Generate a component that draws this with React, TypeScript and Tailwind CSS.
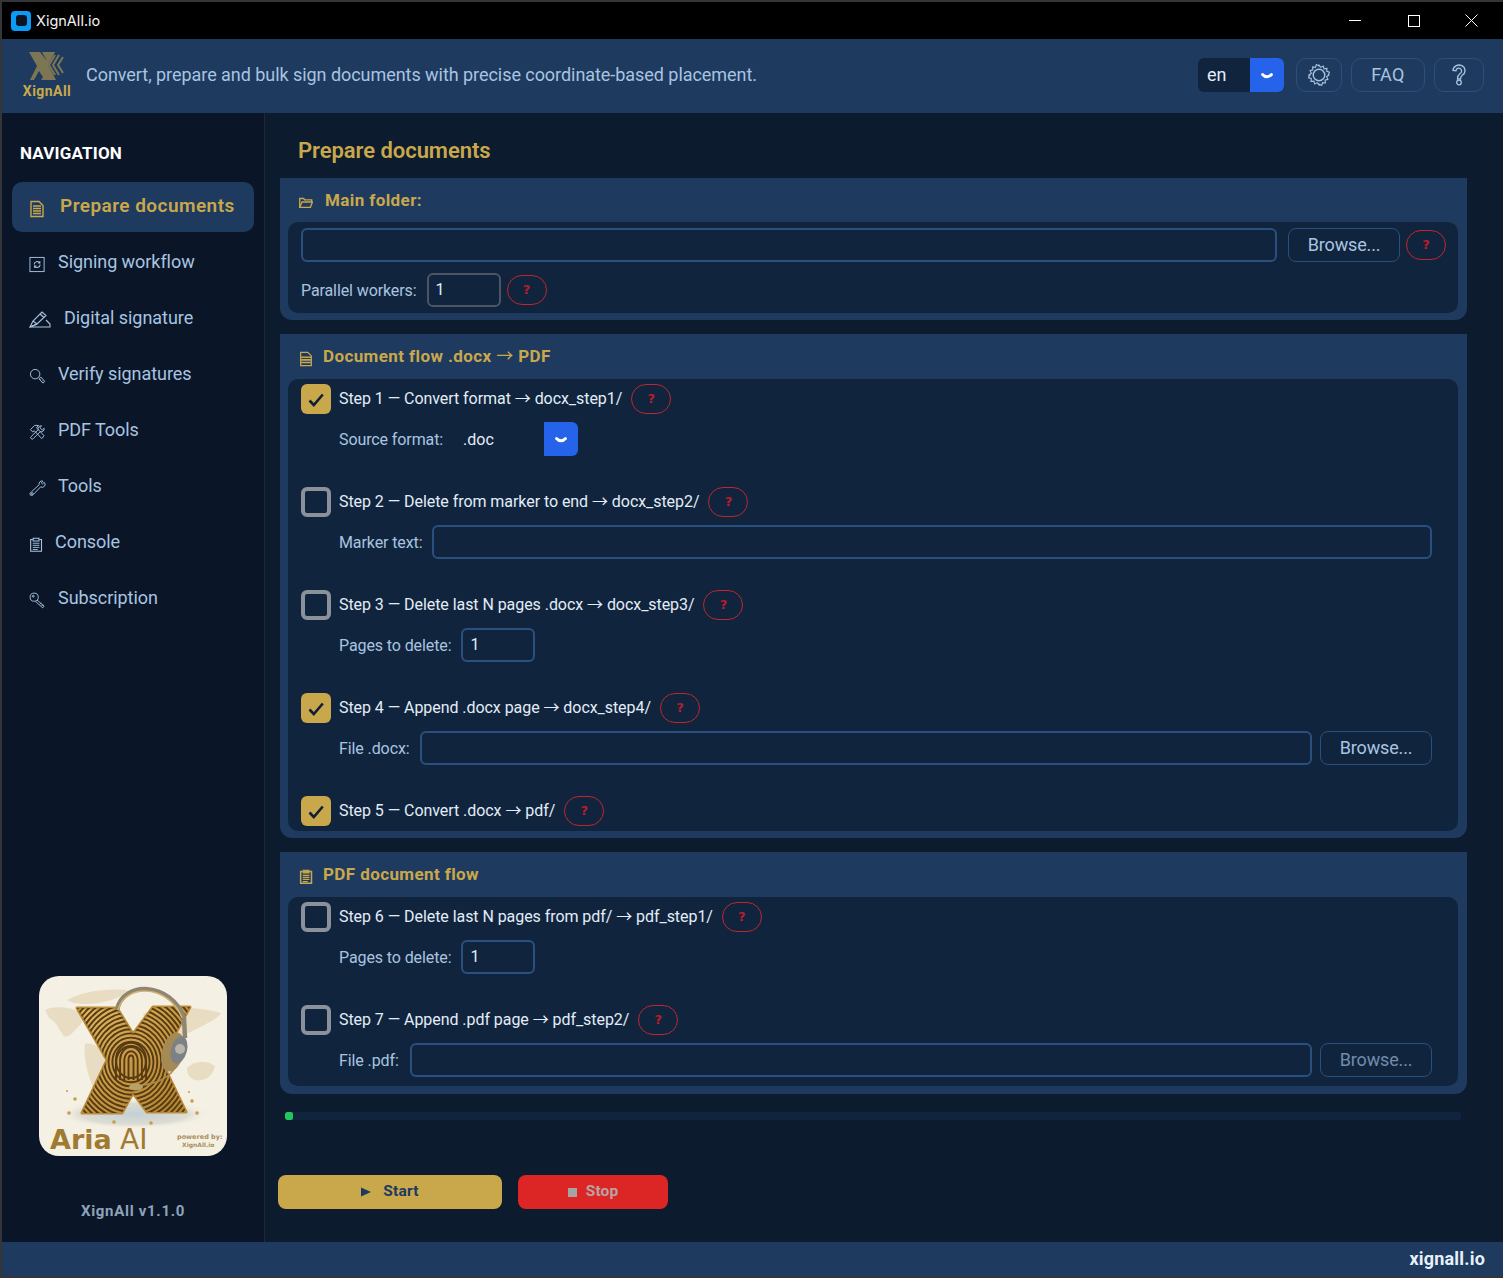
import React from "react";

const FONT = "font-['Roboto','Liberation_Sans',sans-serif]";

function Ico({ size = 18, children, className = "" }: { size?: number; children: React.ReactNode; className?: string }) {
  return (
    <svg width={size} height={size} viewBox="0 0 18 18" fill="none" stroke="currentColor" strokeWidth="1" className={"shrink-0 " + className}>
      {children}
    </svg>
  );
}

const DocIcon = ({ filled = false }: { filled?: boolean }) => (
  <Ico size={filled ? 16 : 18}>
    <path d="M3 1.500h8l4 4v11H3z" strokeWidth="1.400" />
    {filled ? <path d="M3.500 7h11M3.500 10h11M3.500 13h11" strokeWidth="1.800" /> : <path d="M5 6h8M5 8.500h8M5 11h8M5 13.500h8" strokeWidth="1.300" />}
  </Ico>
);
const WorkflowIcon = () => (
  <Ico size={17}>
    <rect x="1" y="1.500" width="15" height="15" />
    <path d="M5.500 9a3.200 3.200 0 0 1 5.800-1.800M11.800 9a3.200 3.200 0 0 1-5.800 1.800M11.500 5.500v2h-2M5.800 12.500v-2h2" strokeWidth="1.100" />
  </Ico>
);
const PenIcon = () => (
  <svg width="22" height="18" viewBox="0 0 22 18" fill="none" stroke="currentColor" strokeWidth="1.100" className="shrink-0 -mt-[2px]">
    <path d="M1 17h20v-3l-4-4M1 17l3-6L13 2l4 3.500L8 14z" />
    <path d="M1 17l7-3M4 11l4 3M11 4l4 3.500" />
  </svg>
);
const SearchIcon = () => (
  <Ico size={17}>
    <circle cx="6.500" cy="6.500" r="5" />
    <path d="M10.500 11.500l2-2 4 4.500-1.500 2z" />
    <path d="M12.500 11.500l-1 1M14.300 13.500l-1 1" />
  </Ico>
);
const KeyIcon = () => (
  <Ico size={17}>
    <circle cx="5.500" cy="5.500" r="4.300" />
    <circle cx="4.500" cy="4.500" r="1" />
    <path d="M8.500 8.500l7.500 6.500-1.500 1.800-7.500-6.800M11.500 13l1.500-1.500M13.500 14.800l1.300-1.500" />
  </Ico>
);
const ToolsIcon = () => (
  <Ico size={17}>
    <path d="M1.500 6L6 1.500h4L8 4l8 8.500-2.500 3L5.500 7 4 8.500z" />
    <path d="M16 4.500a3 3 0 0 1-4 3.500L4.500 15.500a1.500 1.500 0 0 1-2.200-2.200L9.800 6a3 3 0 0 1 3.500-4L11.500 4l2.500 2.300z" />
  </Ico>
);
const WrenchIcon = () => (
  <Ico size={17}>
    <path d="M16 2.500l-1.800 1.700-1.200-1.200L14.700 1.200a3 3 0 0 0-3.900 3.800L2.300 12.800a2.200 2.200 0 0 0-.9 3.100 2.200 2.200 0 0 0 3-.4l8-8.300a3 3 0 0 0 3.700-4.700z" />
    <circle cx="3.400" cy="14.400" r="1" />
  </Ico>
);
const ClipIcon = ({ bold = false }: { bold?: boolean }) => (
  <Ico size={15}>
    <path d="M4.500 3H2v14h13V3h-2.500" strokeWidth={bold ? 1.800 : 1.300} />
    <path d="M5 1.500h7v3.200H5z" strokeWidth="1.300" fill={bold ? "currentColor" : "none"} />
    <path d="M4.500 7.500h8M4.500 10h8M4.500 12.500h8M4.500 15h6" strokeWidth={bold ? 1.500 : 1.100} />
  </Ico>
);
const FolderIcon = () => (
  <svg width="14" height="11" viewBox="0 0 14 11" fill="none" stroke="currentColor" strokeWidth="1.300" className="shrink-0">
    <path d="M.7 10.300V1.500h4l1 1.300h7V5" />
    <path d="M.7 10.300h10.700l2-5.300H3z" />
  </svg>
);
const Chevron = () => (
  <svg width="12" height="8" viewBox="0 0 12 8" fill="none" stroke="white" strokeWidth="2.800" strokeLinecap="round" className="mt-[1px]">
    <path d="M1.500 2.500C4 5.500 8 5.500 10.500 2.500" />
  </svg>
);
const Check = () => (
  <svg width="16" height="14" viewBox="0 0 16 14" fill="none" stroke="#111f36" strokeWidth="2.600">
    <path d="M1.500 7.500l4.300 4.500L14.800 1.500" />
  </svg>
);

function Arrow() {
  return <span className="font-['Noto_Sans_CJK_JP',sans-serif] font-normal">→</span>;
}

function Help() {
  return (
    <button className="w-[40px] h-[30px] shrink-0 rounded-[15px] border border-[#c0262d] text-[#b91c2c] text-[13px] font-bold font-['DejaVu_Sans',sans-serif] flex items-center justify-center leading-none pb-[2px]">?</button>
  );
}
function Browse({ dim = false }: { dim?: boolean }) {
  return (
    <button className={"w-[112px] h-[34px] shrink-0 rounded-[8px] border border-[#2a5080] bg-[#11243d] text-[18px] tracking-[-0.15px] pb-[2px] " + (dim ? "text-[#6f8cab]" : "text-[#a8c4e0]")}>Browse...</button>
  );
}
function TextBox({ className = "", value = "", border = "border-[#2a5080]" }: { className?: string; value?: string; border?: string }) {
  return (
    <input readOnly value={value} className={"h-[34px] rounded-[6px] border-2 bg-transparent px-[7px] pb-[2px] text-[16px] text-[#e2edf8] outline-none " + border + " " + className} />
  );
}
function Sub({ children }: { children: React.ReactNode }) {
  return <div className="flex items-center h-[34px] mt-[8px] ml-[51px] mr-[26px]">{children}</div>;
}
function Label({ children, className = "" }: { children: React.ReactNode; className?: string }) {
  return <span className={"text-[16px] text-[#a8c4e0] whitespace-nowrap tracking-[-0.1px] pt-[1px] " + className}>{children}</span>;
}
function Step({ on = false, before, after, className = "" }: { on?: boolean; before: string; after: string; className?: string }) {
  return (
    <div className={"flex items-center h-[30px] ml-[13px] " + className}>
      {on ? (
        <span className="w-[30px] h-[30px] rounded-[6px] bg-[#c9a84c] flex items-center justify-center pt-[1px]"><Check /></span>
      ) : (
        <span className="w-[30px] h-[30px] rounded-[6px] border-[4px] border-[#8b919b]" />
      )}
      <span className="ml-[8px] mb-[4px] h-[24px] leading-[24px] text-[16px] text-[#e2edf8] whitespace-nowrap tracking-[-0.06px]">{before} <Arrow /> {after}</span>
      <span className="ml-[9px]"><Help /></span>
    </div>
  );
}
function Card({ icon, title, gap, children, hh = 45, pb = 7 }: { icon: React.ReactNode; title: React.ReactNode; gap: string; children: React.ReactNode; hh?: number; pb?: number }) {
  return (
    <section className={"w-[1187px] bg-[#1e3a5f] rounded-b-[12px] pl-[8px] pr-[9px] " + (pb === 8 ? "pb-[8px]" : "pb-[7px]")}>
      <div className={"flex items-center pl-[11px] text-[#c9a84c] " + (hh === 44 ? "h-[44px] pt-[1px]" : "h-[45px]")}>
        <span className="mt-[4px] w-[14px] flex items-center justify-center">{icon}</span>
        <span className={"h-[24px] leading-[24px] text-[17px] font-bold tracking-[0.4px] " + gap}>{title}</span>
      </div>
      <div className="bg-[#11243d] rounded-[10px]">{children}</div>
    </section>
  );
}

function NavItem({ icon, label, gap = "ml-[29px]" }: { icon: React.ReactNode; label: string; gap?: string }) {
  return (
    <div className="flex items-center h-[56px] pl-[27px] text-[#a8c4e0]">
      <span className="w-0 flex items-center mt-[4px]">{icon}</span>
      <span className={"text-[18px] relative mb-[2px] tracking-[-0.05px] " + gap}>{label}</span>
    </div>
  );
}

function AriaLogo() {
  const rings = Array.from({ length: 28 }, (_, i) => 16 + i * 4.200);
  const arches = [2.500, 6.700, 10.900, 15.100];
  return (
    <svg width="188" height="180" viewBox="0 0 188 180" className="rounded-[20px] block">
      <defs>
        <clipPath id="xclip"><path d="M38 32H78L94 58L114 31H151L122 84L147 136H108L94 117L83 137H43L68 84Z" /></clipPath>
        <linearGradient id="gold" x1="0" y1="0" x2="1" y2="1"><stop offset="0" stopColor="#e2b966" /><stop offset="0.500" stopColor="#c89a45" /><stop offset="1" stopColor="#b0832f" /></linearGradient>
        <radialGradient id="glow"><stop offset="0" stopColor="#c4d0d6" /><stop offset="0.700" stopColor="#dcdcd2" /><stop offset="1" stopColor="#f4efe3" stopOpacity="0" /></radialGradient>
      </defs>
      <rect width="188" height="180" fill="#f5f0e4" />
      <g fill="#e8dcc2">
        <path d="M6 34C14 30 28 31 36 34C44 38 46 44 40 50C34 56 30 62 25 60C20 54 18 46 10 42Z" />
        <path d="M46 68C54 66 62 72 66 78C66 92 60 106 54 112C50 100 44 84 46 68Z" />
        <path d="M28 24C42 16 66 12 88 14C84 22 68 26 52 28C42 28 34 28 28 24Z" />
        <path d="M104 38C122 30 158 30 182 37C178 44 162 50 152 56C140 60 128 60 118 52C112 48 106 44 104 38Z" />
        <path d="M86 74C94 70 108 74 114 86C110 102 104 114 98 112C92 100 88 88 86 74Z" />
        <path d="M148 92C156 84 168 84 176 90C174 100 166 106 156 104C150 102 148 98 148 92Z" />
      </g>
      <ellipse cx="95" cy="138" rx="76" ry="15" fill="url(#glow)" />
      <path d="M38 32H78L94 58L114 31H151L122 84L147 136H108L94 117L83 137H43L68 84Z" fill="url(#gold)" stroke="#b98a38" strokeWidth="3" strokeLinejoin="round" />
      <g clipPath="url(#xclip)" fill="none" stroke="#553a13" strokeWidth="1.900">
        {rings.map((r) => (
          <ellipse key={r} cx="92" cy="86" rx={r * 0.92} ry={r} />
        ))}
        {arches.map((r) => (
          <path key={r} d={`M${92 - r} 104V${84} a${r} ${r + 2} 0 0 1 ${2 * r} 0V104`} />
        ))}
      </g>
      <path d="M78 34C84 4 132 6 145 42L146 62" fill="none" stroke="#8f8672" strokeWidth="4.500" />
      <path d="M79 34C86 7 130 8 143 42" fill="none" stroke="#d2b26e" strokeWidth="1.500" />
      <ellipse cx="134" cy="76" rx="11" ry="20" fill="#a68a55" transform="rotate(15 134 76)" />
      <ellipse cx="140" cy="74" rx="8" ry="14" fill="#7d8085" transform="rotate(15 140 74)" />
      <circle cx="141" cy="73" r="5" fill="#b9b5a8" />
      <path d="M136 92C125 108 108 108 94 111" fill="none" stroke="#a88a4c" strokeWidth="1.500" />
      <ellipse cx="97" cy="111" rx="7" ry="3.500" fill="#b9a067" />
      <g fill="#c79c4c">
        <circle cx="36" cy="123" r="1.800" /><circle cx="30" cy="137" r="1.800" /><circle cx="153" cy="125" r="1.800" /><circle cx="158" cy="137" r="1.800" /><circle cx="75" cy="146" r="1.800" /><circle cx="112" cy="147" r="1.800" /><circle cx="28" cy="115" r="1" /><circle cx="150" cy="116" r="1" />
      </g>
      <text x="11" y="173" fontFamily="'DejaVu Sans',sans-serif" fontSize="27" fontWeight="700" fill="#a07a30">Aria</text>
      <text x="81" y="173" fontFamily="'DejaVu Sans',sans-serif" fontSize="28" fill="#a07a30">AI</text>
      <text x="138" y="163" fontFamily="'DejaVu Sans',sans-serif" fontSize="6.500" fontWeight="700" fill="#a98f5c">powered by:</text>
      <text x="143" y="171" fontFamily="'DejaVu Sans',sans-serif" fontSize="6" fontWeight="700" fill="#a98f5c">XignAll.io</text>
    </svg>
  );
}

function HeaderLogo() {
  return (
    <svg width="38" height="30" viewBox="0 0 38 30">
      <path d="M1 1h11l7 9 6-9h2l-7 13 8 15H17l-6-9-5 9H2l7-14z" fill="#7d7654" />
      <path d="M14 1h13l-7 11zM13 29h13l-7-10z" fill="#7d7654" />
      <path d="M27 4l-6 10 6 10M31 4l-6 10 6 10M35 6l-5 8 5 8" fill="none" stroke="#7d7654" strokeWidth="2" />
    </svg>
  );
}

export default function App() {
  return (
    <div className={"w-[1503px] h-[1278px] flex flex-col overflow-hidden bg-[#0d1b2e] border-t-2 border-b-2 border-l-2 border-[#333538] " + FONT}>
      {/* title bar */}
      <div className="h-[37px] bg-black flex items-center shrink-0">
        <span className="ml-[9px] w-[20px] h-[20px] rounded-[4px] bg-[#0a9cf5] flex items-center justify-center">
          <span className="w-[11px] h-[11px] rounded-[3px] bg-[#0b1420]" />
        </span>
        <span className="ml-[5px] mt-[1px] text-[14.5px] text-[#f2f2f2] font-['Inter','Roboto',sans-serif]">XignAll.io</span>
        <div className="ml-auto mr-[1px] flex items-center text-white">
          <span className="w-[58px] flex justify-center"><svg width="12" height="12" viewBox="0 0 12 12" stroke="white"><path d="M0 5.500h12" /></svg></span>
          <span className="w-[59px] flex justify-center"><svg width="12" height="12" viewBox="0 0 12 12" fill="none" stroke="white"><rect x=".5" y=".5" width="11" height="11" /></svg></span>
          <span className="w-[59px] pr-[2px] flex justify-center"><svg width="13" height="13" viewBox="0 0 13 13" stroke="white"><path d="M.5.500l12 12M12.500.500l-12 12" /></svg></span>
        </div>
      </div>
      {/* header */}
      <header className="h-[74px] bg-[#1e3a5f] flex items-center shrink-0">
        <div className="ml-[20px] w-[50px] mb-[3px] flex flex-col items-center text-[#c9a84c]">
          <span className="mt-[2px] h-[30px]"><HeaderLogo /></span>
          <span className="text-[14px] font-bold leading-[18px] mt-[1px] tracking-[0.45px] whitespace-nowrap">XignAll</span>
        </div>
        <span className="ml-[14px] mb-[3px] text-[18px] text-[#a8c4e0] whitespace-nowrap tracking-[-0.05px]">Convert, prepare and bulk sign documents with precise coordinate-based placement.</span>
        <div className="ml-auto mr-[19px] mb-[2px] flex items-center h-[34px]">
          <div className="w-[86px] h-[34px] rounded-[6px] overflow-hidden flex bg-[#11243d]">
            <span className="w-[52px] pl-[9px] text-[18px] text-[#e2edf8] leading-[33px]">en</span>
            <span className="w-[34px] bg-[#2563eb] flex items-center justify-center pt-[1px]"><Chevron /></span>
          </div>
          <button className="ml-[12px] w-[46px] h-[34px] rounded-[10px] border border-[#2a5080] flex items-center justify-center text-[#a8c4e0]">
            <svg width="22" height="22" viewBox="0 0 22 22" fill="none" stroke="currentColor" strokeWidth="1.100">
              <path d="M11 1l1.700 2.400 2.600-1.300.8 2.800 2.900-.4-.3 2.900 2.800.8-1.300 2.600L21 11l-2.400 1.700 1.300 2.600-2.800.8.3 2.900-2.900-.3-.8 2.800-2.600-1.300L11 21l-1.700-2.400-2.600 1.300-.8-2.800-2.900.3.300-2.900-2.800-.8 1.300-2.600L1 11l2.400-1.700-1.300-2.600 2.800-.8-.3-2.900 2.900.4.8-2.800 2.600 1.300z" />
              <circle cx="11" cy="11" r="5.800" strokeWidth="1.400" />
            </svg>
          </button>
          <button className="ml-[9px] w-[74px] h-[34px] rounded-[10px] border border-[#2a5080] text-[18px] tracking-[0.3px] pb-[1px] text-[#a8c4e0]">FAQ</button>
          <button className="ml-[9px] w-[50px] h-[34px] rounded-[10px] border border-[#2a5080] flex items-center justify-center text-[#a8c4e0]">
            <svg width="14" height="22" viewBox="0 0 14 22" fill="none" stroke="currentColor" strokeWidth="1.300">
              <path d="M1 6.500a6 5.500 0 1 1 9.500 4.500c-1.800 1.300-2 2-2 4H5.500c0-2.800.5-4 2.500-5.500a2.800 2.800 0 1 0-4-2.800z" />
              <circle cx="7" cy="18.500" r="2.300" />
            </svg>
          </button>
        </div>
      </header>
      {/* body */}
      <div className="flex-1 flex min-h-0">
        <aside className="w-[263px] shrink-0 bg-[#0a1628] border-r border-[#24282e] flex flex-col">
          <div className="pt-[27px] pl-[18px] text-[17px] font-bold text-white h-[69px] leading-[26px] tracking-[0.18px]">NAVIGATION</div>
          <div className="ml-[10px] w-[242px] h-[50px] rounded-[10px] bg-[#1e3a5f] flex items-center pl-[16px] text-[#c9a84c]">
            <span className="w-0 mt-[3px] flex"><DocIcon /></span>
            <span className="ml-[32px] mb-[2px] text-[19px] font-semibold tracking-[0.45px] whitespace-nowrap">Prepare documents</span>
          </div>
          <div className="mt-[2px]">
            <NavItem icon={<WorkflowIcon />} label="Signing workflow" />
            <NavItem icon={<PenIcon />} label="Digital signature" gap="ml-[35px]" />
            <NavItem icon={<SearchIcon />} label="Verify signatures" />
            <NavItem icon={<ToolsIcon />} label="PDF Tools" />
            <NavItem icon={<WrenchIcon />} label="Tools" />
            <NavItem icon={<ClipIcon />} label="Console" gap="ml-[26px]" />
            <NavItem icon={<KeyIcon />} label="Subscription" />
          </div>
          <div className="mt-auto ml-[37px]"><AriaLogo /></div>
          <div className="mt-[45px] mb-[21px] text-center text-[15px] font-bold text-[#8fa3b8] tracking-[0.7px] leading-[20px]">XignAll v1.1.0</div>
        </aside>
        <main className="flex-1 min-w-0 pl-[15px]">
          <h1 className="mt-[25px] ml-[18px] h-[26px] mb-[14px] text-[22px] leading-[26px] font-semibold text-[#c9a84c] tracking-[-0.05px]">Prepare documents</h1>
          <div className="flex flex-col gap-[14px]">
            <Card icon={<FolderIcon />} title="Main folder:" gap="ml-[12px] mb-[2px]" hh={44}>
              <div className="pt-[6px] pb-[6px]">
                <div className="flex items-center h-[34px] pl-[13px]">
                  <TextBox className="w-[976px]" />
                  <span className="ml-[11px]"><Browse /></span>
                  <span className="ml-[6px]"><Help /></span>
                </div>
                <div className="flex items-center h-[34px] mt-[11px] pl-[13px]">
                  <Label>Parallel workers:</Label>
                  <TextBox className="ml-[10px] w-[74px]" value="1" border="border-[#4b5563]" />
                  <span className="ml-[6px]"><Help /></span>
                </div>
              </div>
            </Card>
            <Card icon={<DocIcon filled />} title={<>Document flow .docx <Arrow /> PDF</>} gap="ml-[10px] mb-[4px]">
              <div className="pt-[5px] pb-[5px]">
                <Step on before="Step 1 — Convert format" after="docx_step1/" />
                <Sub>
                  <Label>Source format:</Label>
                  <span className="ml-[20px] w-[81px] text-[16px] text-[#e2edf8] pt-[1px]">.doc</span>
                  <span className="w-[34px] h-[34px] rounded-r-[6px] bg-[#2563eb] flex items-center justify-center"><Chevron /></span>
                </Sub>
                <Step before="Step 2 — Delete from marker to end" after="docx_step2/" className="mt-[31px]" />
                <Sub>
                  <Label>Marker text:</Label>
                  <TextBox className="ml-[9px] flex-1" />
                </Sub>
                <Step before="Step 3 — Delete last N pages .docx" after="docx_step3/" className="mt-[31px]" />
                <Sub>
                  <Label>Pages to delete:</Label>
                  <TextBox className="ml-[10px] w-[74px]" value="1" />
                </Sub>
                <Step on before="Step 4 — Append .docx page" after="docx_step4/" className="mt-[31px]" />
                <Sub>
                  <Label>File .docx:</Label>
                  <TextBox className="ml-[10px] flex-1" />
                  <span className="ml-[8px]"><Browse /></span>
                </Sub>
                <Step on before="Step 5 — Convert .docx" after="pdf/" className="mt-[31px]" />
              </div>
            </Card>
            <Card icon={<ClipIcon bold />} title="PDF document flow" gap="ml-[10px] mb-[2px]" pb={8}>
              <div className="pt-[5px] pb-[9px]">
                <Step before="Step 6 — Delete last N pages from pdf/" after="pdf_step1/" />
                <Sub>
                  <Label>Pages to delete:</Label>
                  <TextBox className="ml-[10px] w-[74px]" value="1" />
                </Sub>
                <Step before="Step 7 — Append .pdf page" after="pdf_step2/" className="mt-[31px]" />
                <Sub>
                  <Label>File .pdf:</Label>
                  <TextBox className="ml-[11px] flex-1" />
                  <span className="ml-[8px]"><Browse dim /></span>
                </Sub>
              </div>
            </Card>
          </div>
          <div className="mt-[18px] ml-[5px] w-[1176px] h-[8px] rounded-[2px] bg-[#11243d] overflow-hidden">
            <div className="w-[8px] h-[8px] rounded-[2px] bg-[#22c55e]" />
          </div>
          <div className="mt-[55px] -ml-[2px] flex gap-[16px]">
            <button className="w-[224px] h-[34px] rounded-[8px] bg-[#c9a84c] text-[#1e3a5f] text-[15.5px] font-bold tracking-[0.2px] flex items-center justify-center gap-[12px]">
              <svg width="10" height="10" viewBox="0 0 10 10" fill="#1e3a5f"><path d="M0 .5L10 5 0 9.500z" /></svg>
              Start
            </button>
            <button className="w-[150px] h-[34px] rounded-[8px] bg-[#dc2626] text-[#b8a3a3] text-[15.5px] font-bold tracking-[0.1px] flex items-center justify-center gap-[9px]">
              <span className="w-[9px] h-[9px] bg-[#a8a3a3]" />
              Stop
            </button>
          </div>
        </main>
      </div>
      <footer className="h-[34px] shrink-0 bg-[#1e3a5f] flex items-center justify-end pr-[18px] pb-[2px] text-[18px] font-bold tracking-[0.2px] text-[#e8f0f8]">xignall.io</footer>
    </div>
  );
}
